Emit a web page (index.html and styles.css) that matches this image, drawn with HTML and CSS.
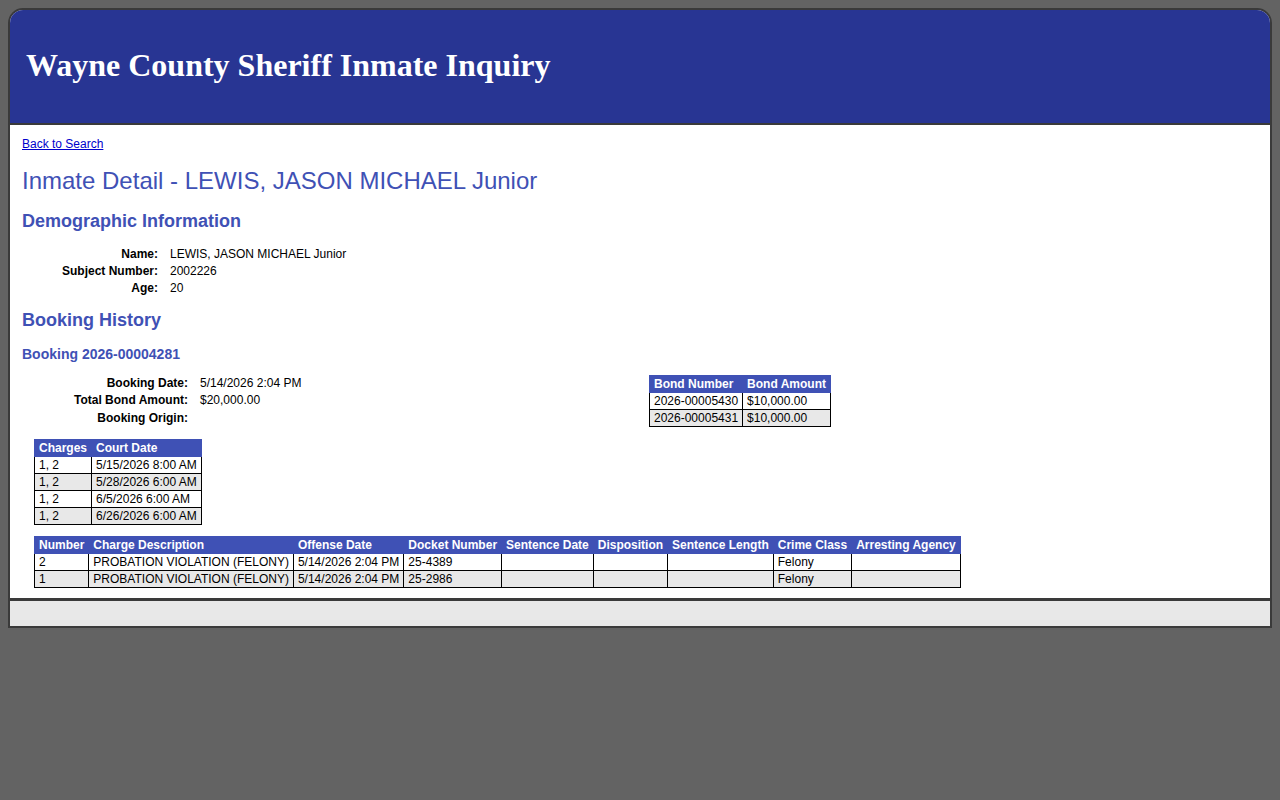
FILE: index.html
```html
<!DOCTYPE html>
<html>
<head>
<meta charset="utf-8">
<title>Wayne County Sheriff Inmate Inquiry</title>
<link rel="stylesheet" href="styles.css">
</head>
<body>
<div class="frame">
  <div class="header">
    <div class="site-title">Wayne County Sheriff Inmate Inquiry</div>
  </div>
  <div class="content">
    <a class="back" href="#">Back to Search</a>
    <h1 class="page-title">Inmate Detail - LEWIS, JASON MICHAEL Junior</h1>
    <h2 class="section">Demographic Information</h2>
    <div class="details demo">
      <div class="lbl">Name:</div><div class="val">LEWIS, JASON MICHAEL Junior</div>
      <div class="lbl">Subject Number:</div><div class="val">2002226</div>
      <div class="lbl">Age:</div><div class="val">20</div>
    </div>
    <h2 class="section history">Booking History</h2>
    <h3 class="booking">Booking 2026-00004281</h3>
    <div class="booking-grid">
      <div class="details book">
        <div class="lbl">Booking Date:</div><div class="val">5/14/2026 2:04 PM</div>
        <div class="lbl">Total Bond Amount:</div><div class="val">$20,000.00</div>
        <div class="lbl">Booking Origin:</div><div class="val"></div>
      </div>
      <div class="bond-col">
        <table class="grid">
          <tr><th>Bond Number</th><th>Bond Amount</th></tr>
          <tr><td>2026-00005430</td><td>$10,000.00</td></tr>
          <tr class="alt"><td>2026-00005431</td><td>$10,000.00</td></tr>
        </table>
      </div>
    </div>
    <table class="grid indent court">
      <tr><th>Charges</th><th>Court Date</th></tr>
      <tr><td>1, 2</td><td>5/15/2026 8:00 AM</td></tr>
      <tr class="alt"><td>1, 2</td><td>5/28/2026 6:00 AM</td></tr>
      <tr><td>1, 2</td><td>6/5/2026 6:00 AM</td></tr>
      <tr class="alt"><td>1, 2</td><td>6/26/2026 6:00 AM</td></tr>
    </table>
    <table class="grid indent charges">
      <tr><th>Number</th><th>Charge Description</th><th>Offense Date</th><th>Docket Number</th><th>Sentence Date</th><th>Disposition</th><th>Sentence Length</th><th>Crime Class</th><th>Arresting Agency</th></tr>
      <tr><td>2</td><td>PROBATION VIOLATION (FELONY)</td><td>5/14/2026 2:04 PM</td><td>25-4389</td><td></td><td></td><td></td><td>Felony</td><td></td></tr>
      <tr class="alt"><td>1</td><td>PROBATION VIOLATION (FELONY)</td><td>5/14/2026 2:04 PM</td><td>25-2986</td><td></td><td></td><td></td><td>Felony</td><td></td></tr>
    </table>
  </div>
  <div class="footer"></div>
</div>
</body>
</html>
```
FILE: styles.css
```css
html, body {
  margin: 0;
  padding: 0;
  background: #636363;
}
body {
  padding: 8px;
  font-family: "Liberation Sans", Arial, sans-serif;
  font-size: 12px;
  color: #000;
}
.frame {
  border: 2px solid #3a3a3a;
  border-radius: 15px 15px 0 0;
  overflow: hidden;
  background: #fff;
}
.header {
  background: #283593;
  height: 113px;
  border-bottom: 2px solid #3a3a3a;
  display: flex;
  align-items: center;
  padding-left: 16px;
}
.site-title {
  font-family: "Liberation Serif", "Times New Roman", serif;
  font-weight: bold;
  font-size: 32px;
  color: #fff;
  margin-top: -2px;
}
.content {
  background: #fff;
  padding: 12px 12px 10px 12px;
}
.back {
  display: block;
  color: #0000cc;
  font-size: 12px;
  line-height: 14px;
}
.page-title {
  margin: 16px 0 0 0;
  font-size: 24px;
  line-height: 28px;
  font-weight: normal;
  color: #3f51b5;
}
.section {
  margin: 15px 0 0 0;
  font-size: 18px;
  line-height: 22px;
  font-weight: bold;
  color: #3f51b5;
}
.section.history {
  margin-top: 12px;
}
.booking {
  margin: 14px 0 0 0;
  font-size: 14px;
  line-height: 18px;
  font-weight: bold;
  color: #3f51b5;
}
.details {
  display: grid;
  column-gap: 12px;
  line-height: 17px;
}
.details .lbl {
  font-weight: bold;
  text-align: right;
}
.demo {
  grid-template-columns: 136px auto;
  margin-top: 14px;
  margin-bottom: 0;
}
.book {
  grid-template-columns: 166px auto;
}
.booking-grid {
  display: grid;
  grid-template-columns: 1fr 1fr;
  margin-top: 12px;
}
.bond-col {
  padding-left: 9px;
  padding-top: 0px;
}
table.grid {
  border-collapse: collapse;
  font-size: 12px;
}
table.grid th {
  background: #3f51b5;
  color: #fff;
  font-weight: bold;
  text-align: left;
  padding: 0 4px;
  line-height: 16px;
  border: 1px solid #3f51b5;
  white-space: nowrap;
}
table.grid td {
  border: 1px solid #000;
  padding: 0 4px;
  line-height: 16px;
  white-space: nowrap;
}
table.grid tr.alt td {
  background: #e8e8e8;
}
.indent {
  margin-left: 12px;
}
.court {
  margin-top: 12px;
}
.charges {
  margin-top: 11px;
}
.footer {
  background: #e8e8e8;
  border-top: 3px solid #3a3a3a;
  height: 25px;
}
```
